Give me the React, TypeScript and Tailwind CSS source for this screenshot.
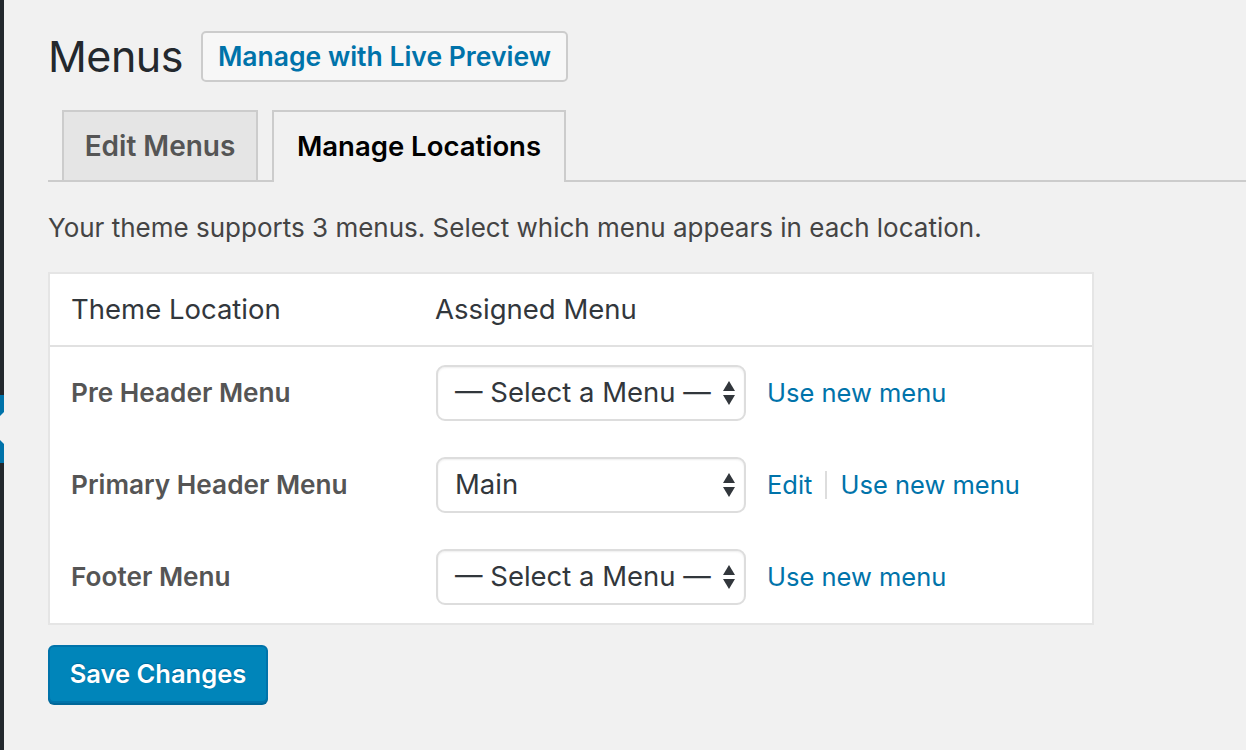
import React from 'react';

const font = { fontFamily: 'Inter, "Noto Sans", "Liberation Sans", sans-serif' };

type Location = { name: string; selected: string; canEdit: boolean };

const locations: Location[] = [
  { name: 'Pre Header Menu', selected: '— Select a Menu —', canEdit: false },
  { name: 'Primary Header Menu', selected: 'Main', canEdit: true },
  { name: 'Footer Menu', selected: '— Select a Menu —', canEdit: false },
];

const SelectArrows: React.FC = () => (
  <svg width="14" height="26" viewBox="0 0 14 26" className="shrink-0">
    <path d="M7 1 L13 11 L1 11 Z" fill="#32373c" />
    <path d="M7 25 L13 15 L1 15 Z" fill="#32373c" />
  </svg>
);

const MenuSelect: React.FC<{ value: string }> = ({ value }) => (
  <div className="w-[310px] h-[56px] bg-white border-2 border-[#dddddd] rounded-[9px] flex items-center justify-between pl-[17px] pr-[8px] shadow-[inset_0_1px_2px_rgba(0,0,0,0.07)]">
    <span className="text-[27.5px] text-[#32373c] whitespace-nowrap">{value}</span>
    <SelectArrows />
  </div>
);

const Sidebar: React.FC = () => (
  <div className="w-[4px] shrink-0 flex flex-col overflow-hidden">
    <div className="h-[395px] bg-[#23282d]" />
    <div className="h-[68px] bg-[#0073aa] relative">
      <div className="absolute right-0 top-[17px] w-0 h-0 border-y-[16px] border-y-transparent border-r-[16px] border-r-[#f1f1f1]" />
    </div>
    <div className="flex-1 bg-[#23282d]" />
  </div>
);

const App: React.FC = () => {
  return (
    <div className="h-[750px] flex bg-[#f1f1f1] overflow-hidden" style={font}>
      <Sidebar />
      <div className="flex-1 pl-[44px] pt-[31px]">
        {/* Title row */}
        <div className="flex items-center gap-[18px]">
          <h1 className="text-[43px] leading-none text-[#23282d] font-normal tracking-[-0.5px]">Menus</h1>
          <button className="h-[51px] w-[367px] bg-[#f7f7f7] border-2 border-[#cccccc] rounded-[5px] text-[26.5px] font-semibold text-[#0073aa]">
            Manage with Live Preview
          </button>
        </div>

        {/* Tabs */}
        <div className="mt-[28px] flex items-end gap-[14px] pl-[14px] border-b-2 border-[#cccccc]">
          <div className="h-[72px] w-[196px] -mb-[2px] flex items-center justify-center bg-[#e5e5e5] border-2 border-[#cccccc] text-[28px] font-semibold text-[#555555]">
            Edit Menus
          </div>
          <div className="h-[72px] w-[294px] -mb-[2px] flex items-center justify-center bg-[#f1f1f1] border-2 border-b-0 border-[#cccccc] text-[27.5px] font-semibold text-black">
            Manage Locations
          </div>
        </div>

        <p className="mt-[26px] text-[26px] text-[#444444]">
          Your theme supports 3 menus. Select which menu appears in each location.
        </p>

        {/* Locations table */}
        <div className="mt-[25px] w-[1046px] bg-white border-2 border-[#e5e5e5]">
          <div className="h-[73px] flex items-center border-b-2 border-[#e1e1e1] text-[27.5px] text-[#32373c]">
            <div className="w-[385px] pl-[21px]">Theme Location</div>
            <div>Assigned Menu</div>
          </div>
          {locations.map((loc) => (
            <div key={loc.name} className="h-[92px] flex items-center">
              <div className="w-[386px] pl-[21px] text-[26.2px] font-semibold text-[#555555]">{loc.name}</div>
              <MenuSelect value={loc.selected} />
              <div className="ml-[21px] flex items-center text-[25.5px] text-[#0073aa]">
                {loc.canEdit && (
                  <>
                    <span>Edit</span>
                    <span className="mx-[13px] w-[2px] h-[28px] bg-[#dddddd]" />
                  </>
                )}
                <span>Use new menu</span>
              </div>
            </div>
          ))}
        </div>

        <button className="mt-[20px] h-[58px] w-[220px] bg-[#0085ba] border-2 border-[#0073aa] rounded-[6px] shadow-[0_2px_0_#006799] text-white text-[25.5px] font-semibold [text-shadow:0_-1px_1px_#006799]">
          Save Changes
        </button>
      </div>
    </div>
  );
};

export default App;
